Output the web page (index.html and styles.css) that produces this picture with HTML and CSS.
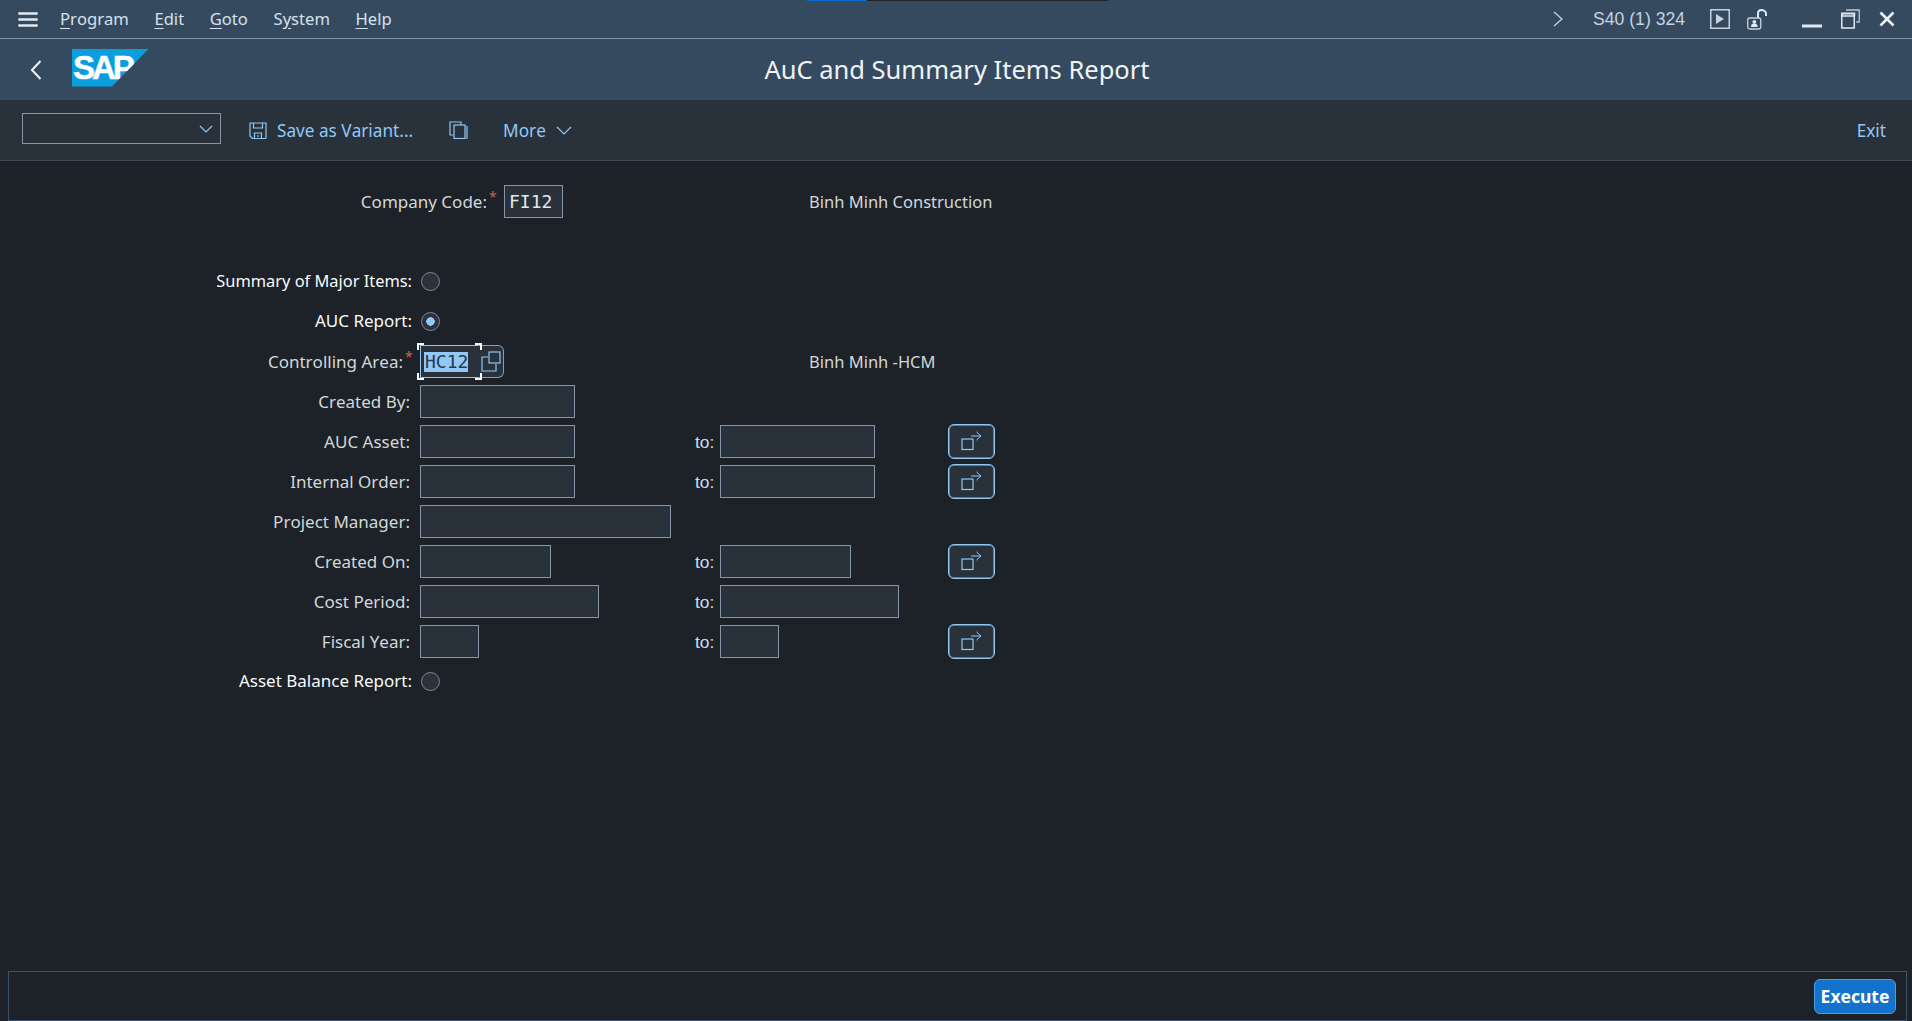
FILE: index.html
```html
<!DOCTYPE html>
<html lang="en">

<head>
  <meta charset="UTF-8">
  <title>AuC and Summary Items Report</title>
  <link rel="stylesheet" href="styles.css">
</head>

<body>
  <div class="progress"><span class="progress-done"></span></div>

  <header class="menubar">
    <svg class="hamburger" width="20" height="15" viewBox="0 0 20 15"><path d="M1.300 1.500h17.400M1.300 7.500h17.400M1.300 13.500h17.400" stroke="#dfe9f4" stroke-width="2.600" stroke-linecap="round"/></svg>
    <nav class="menu">
      <span><u>P</u>rogram</span>
      <span><u>E</u>dit</span>
      <span><u>G</u>oto</span>
      <span>S<u>y</u>stem</span>
      <span><u>H</u>elp</span>
    </nav>
    <div class="sysinfo">
      <svg class="sys-more" width="10" height="16" viewBox="0 0 10 16"><path d="M1 1l8 7-8 7" fill="none" stroke="#c5d3e2" stroke-width="1.300"/></svg>
      <span class="sysname">S40 (1) 324</span>
      <svg class="sys-play" width="20" height="20" viewBox="0 0 20 20"><rect x=".75" y=".75" width="18.500" height="18.500" fill="none" stroke="#c5d3e2" stroke-width="1.500"/><path d="M6 5l8 5-8 5z" fill="#c5d3e2"/></svg>
      <svg class="sys-lock" width="21" height="21" viewBox="0 0 21 21"><path d="M11 9V4.500C11 2.500 12.500 1 14.500 1S19 2.500 19 4.500V7" fill="none" stroke="#dfe9f4" stroke-width="2"/><rect x=".75" y="9" width="13" height="11" rx="2" fill="none" stroke="#c5d3e2" stroke-width="1.300"/><circle cx="7.300" cy="12.800" r="1.900" fill="#dfe9f4"/><path d="M4 18c0-3 1.500-3.500 3.300-3.500s3.300.5 3.300 3.500z" fill="#dfe9f4"/></svg>
      <div class="wincontrols">
        <svg width="20" height="20" viewBox="0 0 20 20"><path d="M0 17h20" stroke="#dfe9f4" stroke-width="3"/></svg>
        <svg width="19" height="20" viewBox="0 0 19 20"><rect x=".75" y="7" width="12.500" height="12" fill="none" stroke="#dfe9f4" stroke-width="1.500"/><path d="M.75 7V4.500h12.500V7" fill="none" stroke="#dfe9f4" stroke-width="2"/><path d="M5 1h13.250v12h-3" fill="none" stroke="#b9c8d8" stroke-width="1.300"/></svg>
        <svg width="16" height="16" viewBox="0 0 16 16"><path d="M1.500 1.500l13 13M14.500 1.500l-13 13" stroke="#eef3f8" stroke-width="2.600"/></svg>
      </div>
    </div>
  </header>

  <div class="titlebar">
    <svg class="back" width="12" height="20" viewBox="0 0 12 20"><path d="M10.500 1L2 10l8.500 9" fill="none" stroke="#eef3f8" stroke-width="2"/></svg>
    <div class="logo">SAP</div>
    <h1 class="title">AuC and Summary Items Report</h1>
  </div>

  <div class="toolbar">
    <div class="variant">
      <svg width="14" height="8" viewBox="0 0 14 8"><path d="M1 1l6 6 6-6" fill="none" stroke="#91c8f6" stroke-width="1.200"/></svg>
    </div>
    <button class="toolbtn save">
      <svg width="18" height="17" viewBox="0 0 18 17"><path d="M1 1h16v14.500a1 1 0 0 1-1 1H3.500L1 14z" fill="none" stroke="#91c8f6" stroke-width="1.200"/><path d="M4.500 1v5h9V1M5.500 16.500V11h7v5.500M9 13v2" fill="none" stroke="#91c8f6" stroke-width="1.200"/></svg>
      Save as Variant...
    </button>
    <button class="toolbtn copy">
      <svg width="19" height="18" viewBox="0 0 19 18"><path d="M4 14H1V1h11v3" fill="none" stroke="#91c8f6" stroke-width="1.200"/><rect x="5" y="4" width="11" height="13.500" fill="none" stroke="#91c8f6" stroke-width="1.200"/><path d="M18 5v13" stroke="#91c8f6" stroke-width="1.200"/></svg>
    </button>
    <button class="toolbtn more">
      More
      <svg width="16" height="9" viewBox="0 0 16 9"><path d="M1 1l7 7 7-7" fill="none" stroke="#91c8f6" stroke-width="1.200"/></svg>
    </button>
    <button class="toolbtn exit">Exit</button>
  </div>

  <main class="form">
    <div class="row-flex row-company">
      <label class="lbl">Company Code:<sup class="req">*</sup></label>
      <div class="field w-59 mono">FI12</div>
      <span class="desc">Binh Minh Construction</span>
    </div>
    <div class="row"></div>

    <div class="row">
      <label class="lbl lbl-radio lbl-summary">Summary of Major Items:</label>
      <span class="radio"></span>
    </div>
    <div class="row">
      <label class="lbl lbl-radio">AUC Report:</label>
      <span class="radio radio-on"></span>
    </div>
    <div class="row-flex row-controlling">
      <label class="lbl">Controlling Area:<sup class="req">*</sup></label>
      <div class="focus-wrap">
        <div class="field w-59 field-focus mono"><span class="selected">HC12</span></div>
        <i class="corner tl"></i><i class="corner tr"></i><i class="corner bl"></i><i class="corner br"></i>
        <button class="f4btn">
          <svg width="20" height="21" viewBox="0 0 20 21"><rect x="8" y="1" width="11" height="11" fill="none" stroke="#91c8f6" stroke-width="1.200"/><path d="M7 6H1v14h14v-7" fill="none" stroke="#91c8f6" stroke-width="1.200"/></svg>
        </button>
      </div>
      <span class="desc">Binh Minh -HCM</span>
    </div>
    <div class="row">
      <label class="lbl">Created By:</label>
      <div class="field w-155"></div>
    </div>
    <div class="row">
      <label class="lbl">AUC Asset:</label>
      <div class="field w-155"></div>
      <span class="to">to:</span>
      <div class="field w-155"></div>
      <button class="multi"><svg width="21" height="20" viewBox="0 0 21 20"><rect x="1" y="8" width="11" height="10.500" fill="none" stroke="#91c8f6" stroke-width="1.200"/><path d="M10 5h10M15.500 1l4.500 4-4.500 4" fill="none" stroke="#91c8f6"/></svg></button>
    </div>
    <div class="row">
      <label class="lbl">Internal Order:</label>
      <div class="field w-155"></div>
      <span class="to">to:</span>
      <div class="field w-155"></div>
      <button class="multi"><svg width="21" height="20" viewBox="0 0 21 20"><rect x="1" y="8" width="11" height="10.500" fill="none" stroke="#91c8f6" stroke-width="1.200"/><path d="M10 5h10M15.500 1l4.500 4-4.500 4" fill="none" stroke="#91c8f6"/></svg></button>
    </div>
    <div class="row">
      <label class="lbl">Project Manager:</label>
      <div class="field w-251"></div>
    </div>
    <div class="row">
      <label class="lbl">Created On:</label>
      <div class="field w-131"></div>
      <span class="to">to:</span>
      <div class="field w-131"></div>
      <button class="multi"><svg width="21" height="20" viewBox="0 0 21 20"><rect x="1" y="8" width="11" height="10.500" fill="none" stroke="#91c8f6" stroke-width="1.200"/><path d="M10 5h10M15.500 1l4.500 4-4.500 4" fill="none" stroke="#91c8f6"/></svg></button>
    </div>
    <div class="row">
      <label class="lbl">Cost Period:</label>
      <div class="field w-179"></div>
      <span class="to">to:</span>
      <div class="field w-179"></div>
    </div>
    <div class="row">
      <label class="lbl">Fiscal Year:</label>
      <div class="field w-59"></div>
      <span class="to">to:</span>
      <div class="field w-59"></div>
      <button class="multi"><svg width="21" height="20" viewBox="0 0 21 20"><rect x="1" y="8" width="11" height="10.500" fill="none" stroke="#91c8f6" stroke-width="1.200"/><path d="M10 5h10M15.500 1l4.500 4-4.500 4" fill="none" stroke="#91c8f6"/></svg></button>
    </div>
    <div class="row">
      <label class="lbl lbl-radio">Asset Balance Report:</label>
      <span class="radio"></span>
    </div>
  </main>

  <footer class="footer">
    <button class="execute">Execute</button>
  </footer>
</body>

</html>
```

FILE: styles.css
```css
* {
  box-sizing: border-box;
}

html,
body {
  margin: 0;
  height: 100%;
}

body {
  display: flex;
  flex-direction: column;
  height: 1021px;
  overflow: hidden;
  position: relative;
  background: #1c2228;
  color: #d3d7d9;
  font-family: "Noto Sans", sans-serif;
  font-size: 17px;
  font-kerning: none;
}

button {
  background: none;
  border: 0;
  padding: 0;
  font: inherit;
  color: inherit;
}

/* loading strip at the very top */
.progress {
  position: absolute;
  left: 807px;
  top: 0;
  width: 301px;
  height: 1px;
  background: #222;
}

.progress-done {
  display: block;
  width: 60px;
  height: 1px;
  background: #0a6ed1;
}

/* menu bar */
.menubar {
  display: flex;
  align-items: center;
  height: 39px;
  padding-left: 18px;
  background: #354a5f;
  border-bottom: 1px solid #7f97b0;
  color: #d5e1ee;
}

.menu {
  display: flex;
  gap: 25.600px;
  margin-left: 22px;
  margin-top: -2px;
  font-size: 16.600px;
}

.menu u {
  text-underline-offset: 3px;
}

.sysinfo {
  display: flex;
  align-items: center;
  margin-left: auto;
  padding-right: 17px;
}

.sysname {
  margin-left: 30px;
  font-family: "Liberation Sans", sans-serif;
  font-size: 17.600px;
  color: #c5d3e2;
}

.sys-play {
  margin-left: 25px;
}

.sys-lock {
  margin-left: 17px;
}

.wincontrols {
  display: flex;
  align-items: center;
  gap: 19px;
  margin-left: 34px;
}

/* title bar */
.titlebar {
  display: flex;
  align-items: center;
  height: 61px;
  padding-left: 30px;
  position: relative;
  background: #354a5f;
}

.logo {
  width: 77px;
  height: 38px;
  margin-left: 30px;
  margin-top: -4px;
  padding-left: 1px;
  background: #0a9edc;
  clip-path: polygon(0 0, 100% 0, 52% 100%, 0 100%);
  color: #fff;
  font-family: "Liberation Sans", sans-serif;
  font-weight: bold;
  font-size: 33px;
  line-height: 37px;
  letter-spacing: -3px;
  -webkit-text-stroke: .5px #fff;
}

.title {
  position: absolute;
  left: 2px;
  right: 0;
  margin: -2px 0 0;
  text-align: center;
  font-size: 25.500px;
  font-weight: 400;
  color: #f0f3f6;
}

/* toolbar */
.toolbar {
  display: flex;
  align-items: center;
  height: 61px;
  padding: 0 26px 0 22px;
  background: #29313a;
  border-bottom: 1px solid #3d4a58;
  color: #91c8f6;
}

.variant {
  display: flex;
  align-items: center;
  justify-content: flex-end;
  width: 199px;
  height: 31px;
  margin-top: -3px;
  padding-right: 7px;
  border: 1px solid #8696a9;
}

.toolbtn {
  display: flex;
  align-items: center;
  font-size: 17.200px;
  color: #91c8f6;
}

.save {
  gap: 10px;
  margin-left: 28px;
}

.copy {
  margin-left: 36px;
}

.more {
  gap: 10px;
  margin-left: 35px;
}

.exit {
  margin-left: auto;
}

/* selection screen */
.form {
  flex: 1;
  padding-top: 20px;
}

.row {
  display: grid;
  grid-template-columns: 420px 275px 25px 228px 47px;
  align-items: center;
  height: 40px;
}

.row-flex {
  display: flex;
  align-items: center;
  height: 40px;
}

.lbl {
  padding-right: 10px;
  text-align: right;
  white-space: nowrap;
}

.lbl-radio {
  margin-top: -2px;
  padding-right: 8px;
  color: #fafafa;
}

.lbl-summary {
  font-size: 16.400px;
}

.row-company .lbl {
  width: 504px;
  padding-right: 8px;
}

.row-company .field {
  margin-right: 246px;
}

.row-controlling .lbl {
  width: 420px;
  padding-right: 8px;
}

.req {
  display: inline-block;
  width: 7px;
  margin-left: 2px;
  color: #c9615c;
  font-size: 14px;
  line-height: 0;
  vertical-align: 6px;
}

.desc {
  white-space: nowrap;
  font-size: 16.500px;
}

.field {
  height: 33px;
  background: #29313a;
  border: 1px solid #8696a9;
}

.mono {
  padding-left: 4px;
  font-family: "DejaVu Sans Mono", monospace;
  font-size: 18px;
  line-height: 31px;
  color: #e4e8ec;
}

.w-59 { width: 59px; }
.w-131 { width: 131px; }
.w-155 { width: 155px; }
.w-179 { width: 179px; }
.w-251 { width: 251px; }

.to {
  padding-top: 2px;
  font-family: "Liberation Sans", sans-serif;
  font-size: 17.400px;
  color: #c9dff2;
}

.radio {
  width: 19px;
  height: 19px;
  margin-left: 1px;
  border-radius: 50%;
  background: #2b323b;
  border: 1px solid #7c8794;
}

.radio-on {
  background: radial-gradient(circle, #91c8f6 0 4px, #2b323b 4.500px);
}

/* focused input with its value help */
.focus-wrap {
  display: flex;
  align-items: center;
  position: relative;
  width: 389px;
}

.field-focus {
  padding-left: 3px;
  border-color: #91c8f6;
}

.selected {
  display: inline-block;
  padding-left: 1px;
  background: #91c8f6;
  color: #27394b;
  line-height: 20px;
}

.corner {
  position: absolute;
  width: 7px;
  height: 7px;
  border: 0 solid #fff;
}

.corner.tl { left: -3px; top: -2px; border-width: 2px 0 0 2px; }
.corner.tr { left: 55px; top: -2px; border-width: 2px 2px 0 0; }
.corner.bl { left: -3px; bottom: -2px; border-width: 0 0 2px 2px; }
.corner.br { left: 55px; bottom: -2px; border-width: 0 2px 2px 0; }

.f4btn {
  width: 26px;
  height: 33px;
  margin-left: -1px;
  border: 1px solid #6fa5d6;
  border-left: 0;
  border-radius: 0 6px 6px 0;
  background: #29313a;
  line-height: 0;
}

.multi {
  width: 47px;
  height: 35px;
  border: 1px solid #91c8f6;
  border-radius: 6px;
  box-shadow: inset 0 0 0 .5px #91c8f6;
  background: #29313a;
  line-height: 0;
}

/* command area */
.footer {
  display: flex;
  align-items: center;
  justify-content: flex-end;
  height: 50px;
  margin: 0 5px 0 8px;
  padding-right: 10px;
  border: 1px solid #3d5066;
}

.execute {
  width: 82px;
  height: 35px;
  background: #1373cc;
  border: 1px solid #4c9ce4;
  border-radius: 6px;
  color: #fff;
  font-weight: 700;
  font-size: 17.500px;
}
```
